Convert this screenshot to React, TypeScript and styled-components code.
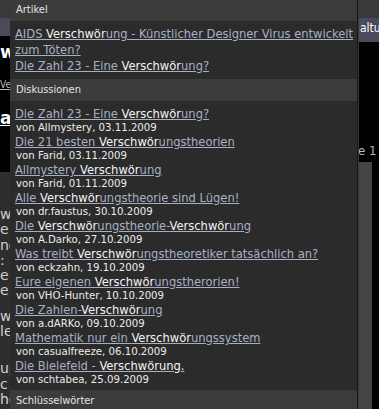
import React from "react";
import styled, { createGlobalStyle } from "styled-components";

const GlobalStyle = createGlobalStyle`
    html, body {
        margin: 0;
        padding: 0;
        background: #000;
    }
    body {
        font-family: "DejaVu Sans Condensed", "Liberation Sans", sans-serif;
    }
`;

type Result = {
    title: string,
    meta?: string
}

const articles: Result[] = [
    { title: "AIDS {Verschwör}ung - Künstlicher Designer Virus entwickelt zum Töten?" },
    { title: "Die Zahl 23 - Eine {Verschwör}ung?" },
];

const discussions: Result[] = [
    { title: "Die Zahl 23 - Eine {Verschwör}ung?", meta: "von Allmystery, 03.11.2009" },
    { title: "Die 21 besten {Verschwör}ungstheorien", meta: "von Farid, 03.11.2009" },
    { title: "Allmystery {Verschwör}ung", meta: "von Farid, 01.11.2009" },
    { title: "Alle {Verschwör}ungstheorie sind Lügen!", meta: "von dr.faustus, 30.10.2009" },
    { title: "Die {Verschwör}ungstheorie-{Verschwör}ung", meta: "von A.Darko, 27.10.2009" },
    { title: "Was treibt {Verschwör}ungstheoretiker tatsächlich an?", meta: "von eckzahn, 19.10.2009" },
    { title: "Eure eigenen {Verschwör}ungstherorien!", meta: "von VHO-Hunter, 10.10.2009" },
    { title: "Die Zahlen-{Verschwör}ung", meta: "von a.dARKo, 09.10.2009" },
    { title: "Mathematik nur ein {Verschwör}ungssystem", meta: "von casualfreeze, 06.10.2009" },
    { title: "Die Bielefeld - {Verschwörung.}", meta: "von schtabea, 25.09.2009" },
];

const Page = styled.div`
    position: relative;
    width: 379px;
    height: 409px;
    overflow: hidden;
    background: #000;
`;

// page content that sits behind the dropdown
const Backdrop = styled.div`
    display: flex;
    justify-content: space-between;
    height: 100%;
`;

const SideStrip = styled.div<{ $width: number }>`
    width: ${p => p.$width}px;
    display: flex;
    flex-direction: column;
    overflow: hidden;
    white-space: nowrap;
`;

const TopBar = styled.div`
    height: 18px;
    flex-shrink: 0;
    background: #393939;
`;

const NavBand = styled.div<{ $height: number }>`
    height: ${p => p.$height}px;
    flex-shrink: 0;
    background: #4a4a5c;
    color: #fff;
    font-family: "DejaVu Sans Condensed", "Liberation Sans", sans-serif;
    font-size: 12px;
    line-height: 20px;
    padding-left: 2px;
`;

const Heading = styled.div<{ $top: number }>`
    margin-top: ${p => p.$top}px;
    color: #fff;
    font-weight: bold;
    font-size: 17px;
    line-height: 20px;
    font-family: "DejaVu Sans", sans-serif;
`;

const SmallLink = styled.div`
    margin-top: 17px;
    color: #bbb;
    font-size: 10px;
    line-height: 12px;
    text-decoration: underline;
`;

const BigLink = styled(Heading)`
    text-decoration: underline;
`;

const GrayBlock = styled.div`
    flex: 1;
    margin-top: 44px;
    background: #2e2e2e;
    padding-top: 35px;
`;

const BodyLine = styled.div<{ $gap?: number }>`
    margin-top: ${p => p.$gap ?? 0}px;
    color: #cfcfcf;
    font-family: "DejaVu Sans", sans-serif;
    font-size: 14px;
    line-height: 15.3px;
`;

const PageNum = styled.div`
    margin-top: 101px;
    color: #b5b5b5;
    font-size: 13px;
    line-height: 16px;
`;

const SideBar = styled.div`
    flex: 1;
    margin-top: 3px;
    width: 13px;
    margin-left: 1px;
    background: #444;
`;

// the search dropdown laid over the page
const Dropdown = styled.div`
    position: absolute;
    left: 10px;
    top: -1px;
    width: 347px;
    border-right: 1px solid #181818;
    background: #2b2b2b;
    box-shadow: 1px 0 0 #3a3a3a;
`;

const SectionHeader = styled.div`
    height: 22px;
    line-height: 22px;
    padding-left: 6px;
    background: #3b3b3b;
    color: #e4e4e4;
    font-size: 11px;
`;

const SectionBody = styled.div<{ $pb: number }>`
    padding: 5px 2px ${p => p.$pb}px 5px;
`;

const Title = styled.a`
    display: block;
    color: #a8b1c4;
    font-size: 12.8px;
    line-height: 16px;
    text-decoration: underline;
    cursor: pointer;
`;

const Mark = styled.span`
    color: #f4f4f4;
`;

const Meta = styled.div`
    color: #ececec;
    font-size: 11.3px;
    line-height: 12px;
    padding-left: 1px;
`;

const renderTitle = (title: string) =>
    title.split(/(\{[^}]*\})/).filter(Boolean).map((part, i) =>
        part.startsWith("{")
            ? <Mark key={i}>{part.slice(1, -1)}</Mark>
            : <React.Fragment key={i}>{part}</React.Fragment>
    );

export default function App() {
    return (
        <Page>
            <GlobalStyle />
            <Backdrop>
                <SideStrip $width={10}>
                    <TopBar />
                    <NavBand $height={18} />
                    <Heading $top={6}>w</Heading>
                    <SmallLink>Ver</SmallLink>
                    <BigLink $top={17}>at</BigLink>
                    <GrayBlock>
                        <BodyLine>wa</BodyLine>
                        <BodyLine>e</BodyLine>
                        <BodyLine>nd</BodyLine>
                        <BodyLine>: (</BodyLine>
                        <BodyLine>e</BodyLine>
                        <BodyLine>e</BodyLine>
                        <BodyLine $gap={10}>wi</BodyLine>
                        <BodyLine>le</BodyLine>
                        <BodyLine $gap={22}>up</BodyLine>
                        <BodyLine>c</BodyLine>
                        <BodyLine>he</BodyLine>
                    </GrayBlock>
                </SideStrip>
                <SideStrip $width={21}>
                    <TopBar />
                    <NavBand $height={24}>altur</NavBand>
                    <PageNum>e 1</PageNum>
                    <SideBar />
                </SideStrip>
            </Backdrop>

            <Dropdown>
                <SectionHeader>Artikel</SectionHeader>
                <SectionBody $pb={5}>
                    {articles.map((a, i) => (
                        <Title key={i}>{renderTitle(a.title)}</Title>
                    ))}
                </SectionBody>
                <SectionHeader>Diskussionen</SectionHeader>
                <SectionBody $pb={4}>
                    {discussions.map((d, i) => (
                        <div key={i}>
                            <Title>{renderTitle(d.title)}</Title>
                            <Meta>{d.meta}</Meta>
                        </div>
                    ))}
                </SectionBody>
                <SectionHeader>Schlüsselwörter</SectionHeader>
            </Dropdown>
        </Page>
    );
}
